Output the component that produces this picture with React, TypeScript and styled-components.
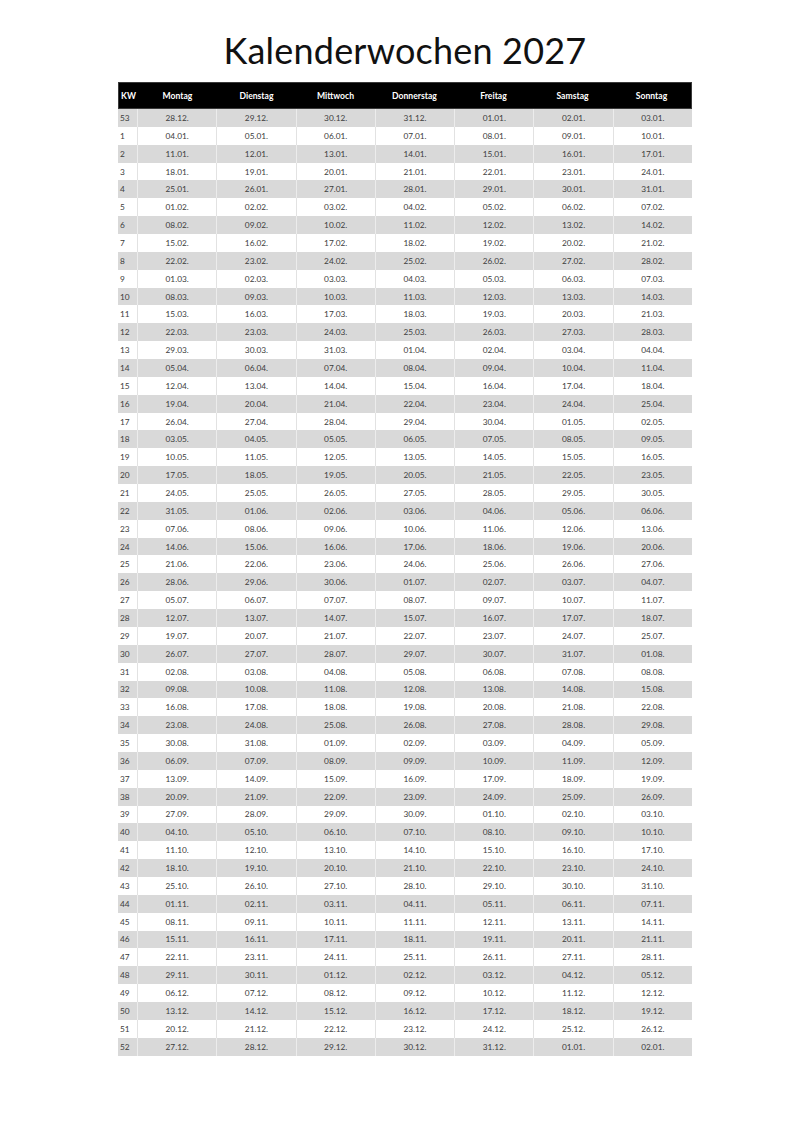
import styled, { createGlobalStyle } from "styled-components";

const GlobalStyle = createGlobalStyle`
  html, body {
    margin: 0;
    padding: 0;
    background: #ffffff;
  }
  body {
    font-family: Lato, "Open Sans", "Liberation Sans", sans-serif;
  }
`;

const DAYS = ["Montag", "Dienstag", "Mittwoch", "Donnerstag", "Freitag", "Samstag", "Sonntag"];

const pad = (n: number) => String(n).padStart(2, "0");

// week 53 of 2026 starts on Mon 28.12.2026, then KW 1..52 of 2027
const buildWeeks = () => {
  const weeks: { kw: number; dates: string[] }[] = [];
  const start = new Date(2026, 11, 28);
  for (let w = 0; w < 53; w++) {
    const dates: string[] = [];
    for (let d = 0; d < 7; d++) {
      const day = new Date(start.getFullYear(), start.getMonth(), start.getDate() + w * 7 + d);
      dates.push(`${pad(day.getDate())}.${pad(day.getMonth() + 1)}.`);
    }
    weeks.push({ kw: w === 0 ? 53 : w, dates });
  }
  return weeks;
};

const Page = styled.div`
  width: 810px;
  height: 1146px;
  display: flex;
  flex-direction: column;
  align-items: center;
  padding-top: 28px;
  box-sizing: border-box;
`;

const Title = styled.h1`
  margin: 0 0 10px 0;
  font-family: Lato, "Open Sans", sans-serif;
  font-weight: 400;
  font-size: 36px;
  line-height: 44px;
  color: #111111;
  letter-spacing: 0.2px;
`;

const Table = styled.div`
  width: 574px;
  display: flex;
  flex-direction: column;
`;

const cols = "19px repeat(7, 1fr)";

const HeaderRow = styled.div`
  display: grid;
  grid-template-columns: ${cols};
  height: 27px;
  background: #000000;
  border: 1px solid #3a3a3a;
  box-sizing: border-box;
`;

const HeadCell = styled.div<{ $left?: boolean }>`
  display: flex;
  align-items: center;
  justify-content: ${(p) => (p.$left ? "flex-start" : "center")};
  padding-left: ${(p) => (p.$left ? "2px" : "0")};
  color: #ffffff;
  font-weight: 700;
  font-size: 8.6px;
`;

const Row = styled.div<{ $shade: boolean }>`
  display: grid;
  grid-template-columns: ${cols};
  height: 17.87px;
  background: ${(p) => (p.$shade ? "#d9d9d9" : "#ffffff")};
`;

const Cell = styled.div<{ $shade: boolean; $left?: boolean }>`
  display: flex;
  align-items: center;
  justify-content: ${(p) => (p.$left ? "flex-start" : "center")};
  padding-left: ${(p) => (p.$left ? "2px" : "0")};
  border-left: ${(p) => (p.$left ? "none" : `1px solid ${p.$shade ? "#ececec" : "#e2e2e2"}`)};
  color: #3c3c3c;
  font-size: 8.3px;
`;

export default function App() {
  const weeks = buildWeeks();
  return (
    <>
      <GlobalStyle />
      <Page>
        <Title>Kalenderwochen 2027</Title>
        <Table>
          <HeaderRow>
            <HeadCell $left>KW</HeadCell>
            {DAYS.map((d) => (
              <HeadCell key={d}>{d}</HeadCell>
            ))}
          </HeaderRow>
          {weeks.map((w, i) => {
            const shade = i % 2 === 0;
            return (
              <Row key={i} $shade={shade}>
                <Cell $shade={shade} $left>
                  {w.kw}
                </Cell>
                {w.dates.map((d, j) => (
                  <Cell key={j} $shade={shade}>
                    {d}
                  </Cell>
                ))}
              </Row>
            );
          })}
        </Table>
      </Page>
    </>
  );
}
